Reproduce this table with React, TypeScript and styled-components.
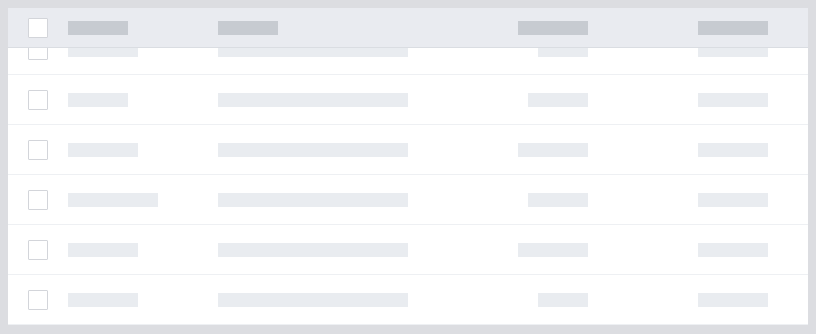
import React, { useLayoutEffect, useRef } from "react";
import styled, { createGlobalStyle } from "styled-components";

const GlobalStyle = createGlobalStyle`
  html, body {
    margin: 0;
    padding: 0;
    background: #dcdde1;
    font-family: "Inter", "Liberation Sans", sans-serif;
  }
  body {
    padding: 8px;
  }
  * {
    box-sizing: border-box;
  }
`;

const Card = styled.div`
  width: 800px;
  height: 317px;
  background: #ffffff;
  overflow-y: auto;
  scrollbar-width: none;
  &::-webkit-scrollbar {
    display: none;
  }
`;

const GRID = "40px 150px 190px 1fr 180px";

const HeaderRow = styled.div`
  position: sticky;
  top: 0;
  z-index: 1;
  display: grid;
  grid-template-columns: ${GRID};
  align-items: center;
  height: 40px;
  padding: 0 40px 0 20px;
  background: #e9ebf0;
  border-bottom: 1px solid #dadde2;
`;

const Row = styled.div`
  display: grid;
  grid-template-columns: ${GRID};
  align-items: center;
  height: 50px;
  padding: 0 40px 0 20px;
  border-bottom: 1px solid #eef0f3;
`;

const Cell = styled.div<{ $end?: boolean }>`
  display: flex;
  justify-content: ${(p) => (p.$end ? "flex-end" : "flex-start")};
  align-items: center;
`;

const Check = styled.span`
  display: block;
  width: 20px;
  height: 20px;
  background: #ffffff;
  border: 1px solid #d3d5da;
  border-radius: 1px;
`;

const Bar = styled.span<{ $head?: boolean }>`
  display: block;
  height: 14px;
  background: ${(p) => (p.$head ? "#c7cbd1" : "#e9ecf0")};
`;

type RowData = { a: number; b: number; c: number; d: number };

const rows: RowData[] = [
  { a: 70, b: 190, c: 50, d: 70 },
  { a: 60, b: 190, c: 60, d: 70 },
  { a: 70, b: 190, c: 70, d: 70 },
  { a: 90, b: 190, c: 60, d: 70 },
  { a: 70, b: 190, c: 70, d: 70 },
  { a: 70, b: 190, c: 50, d: 70 },
];

export default function App() {
  const ref = useRef<HTMLDivElement>(null);

  useLayoutEffect(() => {
    const el = ref.current;
    if (el) el.scrollTop = el.scrollHeight;
  }, []);

  return (
    <>
      <GlobalStyle />
      <Card ref={ref}>
        <HeaderRow>
          <Cell>
            <Check />
          </Cell>
          <Cell>
            <Bar $head style={{ width: 60 }} />
          </Cell>
          <Cell>
            <Bar $head style={{ width: 60 }} />
          </Cell>
          <Cell $end>
            <Bar $head style={{ width: 70 }} />
          </Cell>
          <Cell $end>
            <Bar $head style={{ width: 70 }} />
          </Cell>
        </HeaderRow>
        {rows.map((r, i) => (
          <Row key={i}>
            <Cell>
              <Check />
            </Cell>
            <Cell>
              <Bar style={{ width: r.a }} />
            </Cell>
            <Cell>
              <Bar style={{ width: r.b }} />
            </Cell>
            <Cell $end>
              <Bar style={{ width: r.c }} />
            </Cell>
            <Cell $end>
              <Bar style={{ width: r.d }} />
            </Cell>
          </Row>
        ))}
      </Card>
    </>
  );
}
